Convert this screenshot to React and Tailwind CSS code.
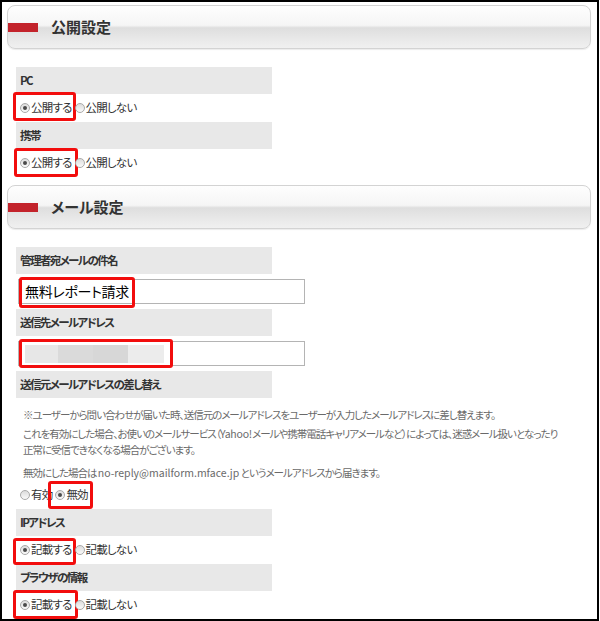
import React from "react";

const jp = { fontFamily: '"Noto Sans CJK JP", "Noto Sans", sans-serif' };

function SectionHead({ title }) {
  return (
    <div className="h-[44px] w-[584px] rounded-[8px] border border-[#d3d3d3] bg-[linear-gradient(to_bottom,#fefefe_0%,#f5f5f5_46%,#dedede_52%,#e9e9e9_80%,#f0f0f0_100%)] flex items-center shadow-[0_1px_1px_rgba(0,0,0,0.08)]">
      <div className="w-[30px] h-[9px] bg-[#c3232b]" />
      <span className="ml-[13px] text-[15px] font-bold text-[#333] [font-feature-settings:'palt']">
        {title}
      </span>
    </div>
  );
}

function Label({ children, className = "" }) {
  return (
    <div
      className={
        "w-[256px] h-[27px] bg-[#e8e8e8] pl-[4px] flex items-center text-[11.5px] tracking-[-1.6px] font-bold text-[#333] [font-feature-settings:'palt'] " +
        className
      }
    >
      {children}
    </div>
  );
}

function Radio({ checked }) {
  return (
    <span className="w-[10px] h-[10px] rounded-full border border-[#a9a9a9] bg-[linear-gradient(to_bottom,#dcdcdc,#fafafa)] flex items-center justify-center shrink-0">
      {checked && <span className="w-[4px] h-[4px] rounded-full bg-[#4a4a4a]" />}
    </span>
  );
}

function Option({ checked, label, mark }) {
  return (
    <span className="relative h-[16px] flex items-center">
      <Radio checked={checked} />
      <span className="ml-[1px] text-[11.5px] tracking-[-0.8px] text-[#333] [font-feature-settings:'palt']">
        {label}
      </span>
      {mark && (
        <span
          className={
            "absolute border-[3px] border-[#f20d0d] rounded-[3px] pointer-events-none " + mark
          }
        />
      )}
    </span>
  );
}

function RadioRow({ options, className = "" }) {
  return (
    <div className={"h-[28px] pl-[4px] flex items-center gap-[3px] " + className}>
      {options.map((o) => (
        <Option key={o.label} {...o} />
      ))}
    </div>
  );
}

function Field({ children, mark }) {
  return (
    <div className="relative mt-[5px] ml-[2px] w-[287px] h-[25px] border border-[#b4b4b4] bg-white flex items-center pl-[6px]">
      {children}
      <span
        className={
          "absolute border-[3px] border-[#f20d0d] rounded-[3px] pointer-events-none " + mark
        }
      />
    </div>
  );
}

export default function App() {
  return (
    <div
      className="w-[599px] h-[621px] border-2 border-black bg-white overflow-hidden pl-[5px] pt-[3px]"
      style={jp}
    >
      <SectionHead title="公開設定" />
      <div className="ml-[9px] mt-[18px]">
        <Label>PC</Label>
        <RadioRow
          options={[
            { checked: true, label: "公開する", mark: "-left-[7px] -right-[4px] -top-[8px] -bottom-[5px]" },
            { checked: false, label: "公開しない" },
          ]}
        />
        <Label>携帯</Label>
        <RadioRow
          options={[
            { checked: true, label: "公開する", mark: "-left-[6px] -right-[6px] -top-[7px] -bottom-[6px]" },
            { checked: false, label: "公開しない" },
          ]}
        />
      </div>

      <div className="mt-[8px]">
        <SectionHead title="メール設定" />
      </div>
      <div className="ml-[9px] mt-[18px]">
        <Label>管理者宛メールの件名</Label>
        <Field mark="left-[0px] w-[116px] -top-[3px] -bottom-[5px]">
          <span className="text-[14px] tracking-[-0.3px] text-black [font-feature-settings:'palt']">無料レポート請求</span>
        </Field>
        <Label className="mt-[5px]">送信先メールアドレス</Label>
        <Field mark="left-[0px] w-[154px] -top-[3px] -bottom-[3px]">
          <div className="flex h-[18px]">
            <div className="w-[33px] bg-[#e7e7e7]" />
            <div className="w-[35px] bg-[#dadada]" />
            <div className="w-[35px] bg-[#d7d7d7]" />
            <div className="w-[36px] bg-[#ececec]" />
          </div>
        </Field>
        <Label className="mt-[5px]">送信元メールアドレスの差し替え</Label>
        <div className="pl-[7px] text-[10.5px] leading-[16px] text-[#6a6a6a] whitespace-nowrap [font-feature-settings:'palt'] tracking-[-1px]">
          <p className="mt-[9px]">
            ※ユーザーから問い合わせが届いた時、送信元のメールアドレスをユーザーが入力したメールアドレスに差し替えます。
          </p>
          <p className="mt-[3px]">
            これを有効にした場合、お使いのメールサービス（<span className="tracking-[-0.2px]">Yahoo!</span>メールや携帯電話キャリアメールなど）によっては、迷惑メール扱いとなったり
            <br />
            正常に受信できなくなる場合がございます。
          </p>
          <p className="mt-[7px]">
            無効にした場合は <span className="tracking-[0px]">no-reply@mailform.mface.jp</span> というメールアドレスから届きます。
          </p>
        </div>
        <RadioRow
          className="h-[26px]"
          options={[
            { checked: false, label: "有効" },
            { checked: true, label: "無効", mark: "-left-[7px] -right-[5px] -top-[6px] -bottom-[6px]" },
          ]}
        />
        <Label>IPアドレス</Label>
        <RadioRow
          options={[
            { checked: true, label: "記載する", mark: "-left-[7px] -right-[4px] -top-[4px] -bottom-[7px]" },
            { checked: false, label: "記載しない" },
          ]}
        />
        <Label>ブラウザの情報</Label>
        <RadioRow
          options={[
            { checked: true, label: "記載する", mark: "-left-[7px] -right-[6px] -top-[7px] -bottom-[6px]" },
            { checked: false, label: "記載しない" },
          ]}
        />
      </div>
    </div>
  );
}
